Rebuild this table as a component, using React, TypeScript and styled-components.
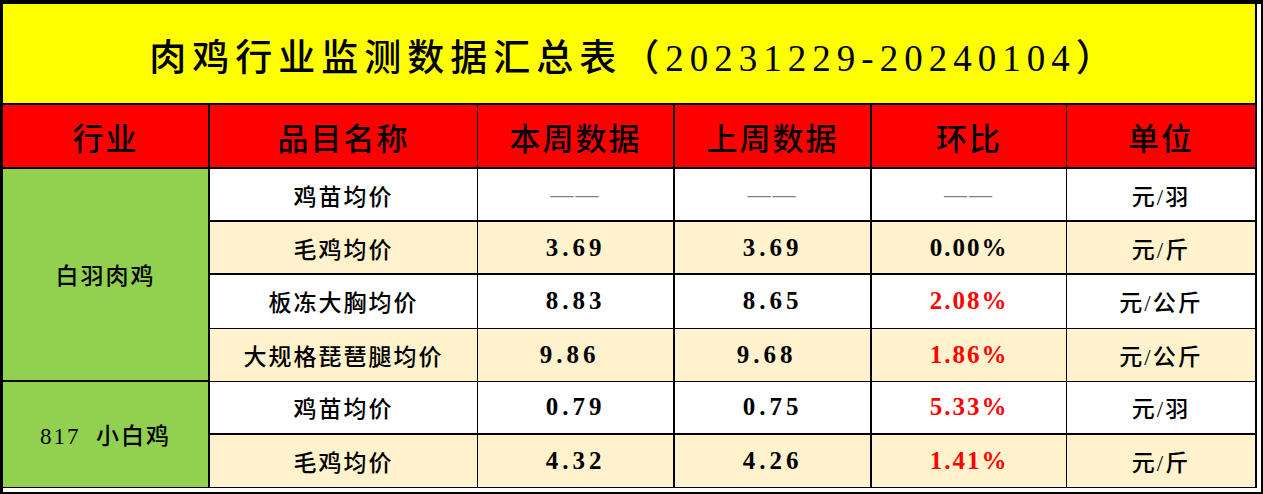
import React from "react";
import styled, { createGlobalStyle } from "styled-components";

const GlobalStyle = createGlobalStyle`
  html, body {
    margin: 0;
    padding: 0;
    background: #ffffff;
  }
`;

const FONT = `"Liberation Serif", "Noto Sans CJK SC", serif`;

const Frame = styled.div`
  width: 1263px;
  height: 494px;
  box-sizing: border-box;
  border-style: solid;
  border-color: #000;
  border-width: 4px 2px 2px 3px;
  padding: 0 4px 4px 0;
  background: #fff;
`;

const Sheet = styled.div`
  display: grid;
  grid-template-columns: 207px 268px 197px 197px 195px 190px;
  grid-template-rows: 101px 64px repeat(6, 1fr);
  height: 100%;
  font-family: ${FONT};
  font-weight: 500;
  color: #000;
`;

const Title = styled.div`
  grid-column: 1 / -1;
  background: #ffff00;
  border-right: 2px solid #000;
  border-bottom: 2px solid #000;
  display: flex;
  align-items: center;
  justify-content: center;
  font-size: 37px;
  letter-spacing: 6px;
  padding: 2px 0 0 10px;
`;

const HeadCell = styled.div<{ $edge: number }>`
  background: #ff0000;
  border-right: ${(p) => p.$edge}px solid #000;
  border-bottom: 2px solid #000;
  display: flex;
  align-items: center;
  justify-content: center;
  font-size: 31px;
  letter-spacing: 2px;
`;

const GroupCell = styled.div<{ $span: number; $thin?: boolean }>`
  grid-row: span ${(p) => p.$span};
  background: #92d050;
  border-right: 2px solid #000;
  border-bottom: ${(p) => (p.$thin ? 1 : 2)}px solid #000;
  display: flex;
  align-items: center;
  justify-content: center;
  font-size: 23px;
  letter-spacing: 2px;
  white-space: pre;
`;

const Cell = styled.div<{ $edge: number; $thin?: boolean; $cream?: boolean }>`
  background: ${(p) => (p.$cream ? "#fff2cc" : "#ffffff")};
  border-right: ${(p) => p.$edge}px solid #000;
  border-bottom: ${(p) => (p.$thin ? 1 : 2)}px solid #000;
  display: flex;
  align-items: center;
  justify-content: center;
  font-size: 23px;
  letter-spacing: 2px;
  white-space: nowrap;
`;

const Num = styled.span<{ $nudge?: boolean }>`
  font-size: 25px;
  font-weight: bold;
  letter-spacing: 4px;
  margin-right: ${(p) => (p.$nudge ? 12 : 0)}px;
`;

const Pct = styled.span<{ $up?: boolean }>`
  font-size: 25px;
  font-weight: bold;
  letter-spacing: 2px;
  color: ${(p) => (p.$up ? "#ff0000" : "#000")};
`;

const Dash = styled.span`
  color: #808080;
  font-weight: normal;
  letter-spacing: 2px;
`;

type Row = {
  name: string;
  cur: string;
  prev: string;
  ratio: string;
  unit: string;
  nudge?: boolean;
  thin?: boolean;
};

const heads = ["行业", "品目名称", "本周数据", "上周数据", "环比", "单位"];
const edges = [2, 1, 2, 2, 1, 2];

const rows: Row[] = [
  { name: "鸡苗均价", cur: "——", prev: "——", ratio: "——", unit: "元/羽" },
  { name: "毛鸡均价", cur: "3.69", prev: "3.69", ratio: "0.00%", unit: "元/斤" },
  { name: "板冻大胸均价", cur: "8.83", prev: "8.65", ratio: "2.08%", unit: "元/公斤", thin: true },
  { name: "大规格琵琶腿均价", cur: "9.86", prev: "9.68", ratio: "1.86%", unit: "元/公斤", nudge: true, thin: true },
  { name: "鸡苗均价", cur: "0.79", prev: "0.75", ratio: "5.33%", unit: "元/羽" },
  { name: "毛鸡均价", cur: "4.32", prev: "4.26", ratio: "1.41%", unit: "元/斤", thin: true },
];

const value = (v: string, nudge?: boolean) =>
  v === "——" ? <Dash>{v}</Dash> : <Num $nudge={nudge}>{v}</Num>;

const ratio = (v: string) =>
  v === "——" ? (
    <Dash>{v}</Dash>
  ) : (
    <Pct $up={parseFloat(v) > 0}>{v}</Pct>
  );

const App: React.FC = () => {
  return (
    <>
      <GlobalStyle />
      <Frame>
        <Sheet>
          <Title>肉鸡行业监测数据汇总表（20231229-20240104）</Title>
          {heads.map((h, i) => (
            <HeadCell key={h} $edge={edges[i]}>
              {h}
            </HeadCell>
          ))}
          {rows.map((r, i) => {
            const cream = i % 2 === 1;
            return (
              <React.Fragment key={i}>
                {i === 0 && <GroupCell $span={4}>白羽肉鸡</GroupCell>}
                {i === 4 && (
                  <GroupCell $span={2} $thin>
                    {"817  小白鸡"}
                  </GroupCell>
                )}
                <Cell $edge={1} $thin={r.thin} $cream={cream}>
                  {r.name}
                </Cell>
                <Cell $edge={2} $thin={r.thin} $cream={cream}>
                  {value(r.cur, r.nudge)}
                </Cell>
                <Cell $edge={2} $thin={r.thin} $cream={cream}>
                  {value(r.prev, r.nudge)}
                </Cell>
                <Cell $edge={1} $thin={r.thin} $cream={cream}>
                  {ratio(r.ratio)}
                </Cell>
                <Cell $edge={2} $thin={r.thin} $cream={cream}>
                  {r.unit}
                </Cell>
              </React.Fragment>
            );
          })}
        </Sheet>
      </Frame>
    </>
  );
};

export default App;
